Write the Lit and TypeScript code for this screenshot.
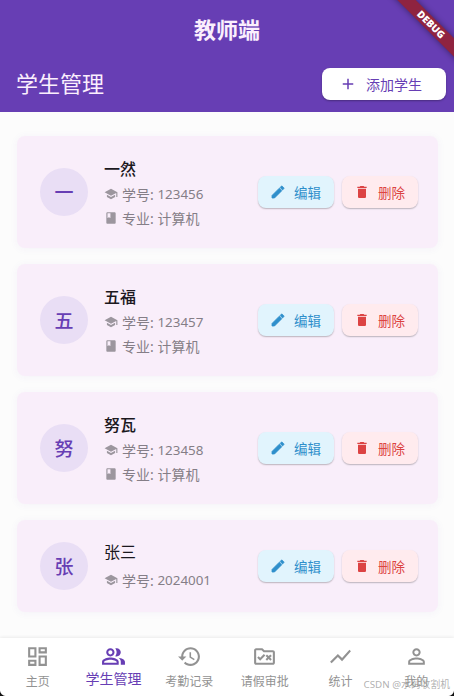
import { LitElement, html, css, svg } from "lit";
import { customElement, property } from "lit/decorators.js";

const ICONS: Record<string, string> = {
  dashboard: "M19 5v2h-4V5h4M9 5v6H5V5h4m10 8v6h-4v-6h4M9 17v2H5v-2h4M21 3h-8v6h8V3zM11 3H3v10h8V3zm10 8h-8v10h8V11zm-10 4H3v6h8v-6z",
  people: "M16.67 13.13C18.04 14.06 19 15.32 19 17v3h4v-3c0-2.18-3.57-3.47-6.33-3.87zM15 12c2.21 0 4-1.79 4-4s-1.79-4-4-4c-.47 0-.91.1-1.33.24C14.5 5.27 15 6.58 15 8s-.5 2.73-1.33 3.76c.42.14.86.24 1.33.24zM9 12c2.21 0 4-1.79 4-4s-1.79-4-4-4-4 1.79-4 4 1.79 4 4 4zm0-6c1.1 0 2 .9 2 2s-.9 2-2 2-2-.9-2-2 .9-2 2-2zM9 13c-2.67 0-8 1.34-8 4v3h16v-3c0-2.66-5.33-4-8-4zm6 5H3v-.99C3.2 16.29 6.3 15 9 15s5.8 1.29 6 2v1z",
  history: "M13 3c-4.97 0-9 4.03-9 9H1l3.89 3.89.07.14L9 12H6c0-3.87 3.13-7 7-7s7 3.13 7 7-3.13 7-7 7c-1.93 0-3.68-.79-4.94-2.06l-1.42 1.42C8.27 19.99 10.51 21 13 21c4.97 0 9-4.03 9-9s-4.03-9-9-9zm-1 5v5l4.28 2.54.72-1.21-3.5-2.08V8H12z",
  rule: "M20 6h-8l-2-2H4c-1.1 0-1.99.9-1.99 2L2 18c0 1.1.9 2 2 2h16c1.1 0 2-.9 2-2V8c0-1.1-.9-2-2-2zm0 12H4V6h5.17l2 2H20v10zM7.83 16l4.95-4.95-1.41-1.42-3.54 3.54-1.41-1.41L5 13.17 7.83 16zM14.41 16L16 14.41 17.59 16 19 14.59 17.41 13 19 11.41 17.59 10 16 11.59 14.41 10 13 11.41 14.59 13 13 14.59z",
  chart: "M3.5 18.49l6-6.01 4 4L22 6.92l-1.41-1.41-7.09 7.97-4-4L2 16.99z",
  person: "M12 5.9c1.16 0 2.1.94 2.1 2.1s-.94 2.1-2.1 2.1S9.9 9.16 9.9 8s.94-2.1 2.1-2.1m0 9c2.97 0 6.1 1.46 6.1 2.1v1.1H5.9V17c0-.64 3.13-2.1 6.1-2.1M12 4C9.79 4 8 5.79 8 8s1.79 4 4 4 4-1.79 4-4-1.79-4-4-4zm0 9c-2.67 0-8 1.34-8 4v3h16v-3c0-2.66-5.33-4-8-4z",
  school: "M5 13.18v4L12 21l7-3.82v-4L12 17l-7-3.82zM12 3L1 9l11 6 9-4.91V17h2V9L12 3z",
  book: "M18 2H6c-1.1 0-2 .9-2 2v16c0 1.1.9 2 2 2h12c1.1 0 2-.9 2-2V4c0-1.1-.9-2-2-2zM6 4h5v8l-2.5-1.5L6 12V4z",
  edit: "M3 17.25V21h3.75L17.81 9.94l-3.75-3.75L3 17.25zM20.71 7.04c.39-.39.39-1.02 0-1.41l-2.34-2.34c-.39-.39-1.02-.39-1.41 0l-1.83 1.83 3.75 3.75 1.83-1.83z",
  delete: "M6 19c0 1.1.9 2 2 2h8c1.1 0 2-.9 2-2V7H6v12zM19 4h-3.5l-1-1h-5l-1 1H5v2h14V4z",
  add: "M19 13h-6v6h-2v-6H5v-2h6V5h2v6h6v2z",
};

@customElement("md-icon")
class MdIcon extends LitElement {
  @property() name = "";
  static styles = css`
    :host { display: block; flex: none; }
    svg { display: block; width: 100%; height: 100%; fill: currentColor; }
    .bold { stroke: currentColor; stroke-width: 1.2; }
  `;
  render() {
    return html`<svg class=${this.name === "edit" ? "bold" : ""} viewBox="0 0 24 24">${svg`<path d=${ICONS[this.name] ?? ""}></path>`}</svg>`;
  }
}

interface Student { name: string; id: string; major?: string; }

@customElement("student-card")
class StudentCard extends LitElement {
  @property({ attribute: false }) student!: Student;
  static styles = css`
    :host {
      display: flex; align-items: center; box-sizing: border-box; height: 112px;
      padding: 0 20px 0 23px; border-radius: 8px; background: #f9eefa;
      box-shadow: 0 1px 8px rgba(103, 62, 180, 0.05);
    }
    :host([short]) { height: 92px; }
    .avatar {
      width: 48px; height: 48px; border-radius: 50%; background: #e9def5; color: #673eb4;
      display: flex; align-items: center; justify-content: center;
      font-size: 19px; font-weight: 500; flex: none;
    }
    .info { margin-left: 16px; flex: 1; padding-top: 2px; }
    .name { font-size: 16px; font-weight: 500; line-height: 24px; color: #1b181e; margin-bottom: 1px; }
    :host([short]) .info { padding: 0; }
    :host([short]) .name { font-weight: 400; line-height: 23px; margin-bottom: 4px; }
    .line { display: flex; align-items: center; height: 24px; font-size: 14px; color: #857e87; white-space: pre; }
    .line md-icon { width: 14px; height: 14px; margin-right: 4px; color: #9c969e; }
    .num { font-size: 13.4px; }
    .actions { display: flex; gap: 8px; }
    .btn {
      display: flex; align-items: center; box-sizing: border-box; width: 76px; height: 32px;
      padding-left: 12px; border-radius: 8px; font-size: 13.5px;
      box-shadow: 0 1px 1.5px rgba(0, 0, 0, 0.25);
    }
    .btn md-icon { width: 16px; height: 16px; margin-right: 8px; }
    .edit { background: #e1f4fd; color: #2f8fcb; }
    .delete { background: #ffebee; color: #dc4343; }
  `;
  render() {
    const s = this.student;
    return html`
      <div class="avatar">${s.name[0]}</div>
      <div class="info">
        <div class="name">${s.name}</div>
        <div class="line"><md-icon name="school"></md-icon>学号: <span class="num">${s.id}</span></div>
        ${s.major ? html`<div class="line"><md-icon name="book"></md-icon>专业: ${s.major}</div>` : null}
      </div>
      <div class="actions">
        <div class="btn edit"><md-icon name="edit"></md-icon>编辑</div>
        <div class="btn delete"><md-icon name="delete"></md-icon>删除</div>
      </div>`;
  }
}

const STUDENTS: Student[] = [
  { name: "一然", id: "123456", major: "计算机" },
  { name: "五福", id: "123457", major: "计算机" },
  { name: "努瓦", id: "123458", major: "计算机" },
  { name: "张三", id: "2024001" },
];

const TABS = [
  ["dashboard", "主页"],
  ["people", "学生管理"],
  ["history", "考勤记录"],
  ["rule", "请假审批"],
  ["chart", "统计"],
  ["person", "我的"],
];

@customElement("app-root")
class AppRoot extends LitElement {
  static styles = css`
    :host {
      display: flex; flex-direction: column; position: relative; overflow: hidden;
      height: 696px; background: #fcfcfc;
      font-family: "Noto Sans", "Noto Sans CJK SC", sans-serif;
    }
    header { height: 112px; background: #673eb4; color: #fbeffd; flex: none; }
    .title { height: 60px; line-height: 59px; text-align: center; font-size: 22px; font-weight: 700; }
    .bar { display: flex; align-items: center; justify-content: space-between; height: 48px; padding: 0 8px 0 16px; }
    .heading { font-size: 22px; line-height: 32px; margin-top: -2px; }
    .add {
      display: flex; align-items: center; box-sizing: border-box; width: 124px; height: 32px;
      padding-left: 17px; border-radius: 8px; background: #fff; color: #673eb4;
      font-size: 14px; font-weight: 400; box-shadow: 0 1px 2px rgba(0, 0, 0, 0.3);
    }
    .add md-icon { width: 18px; height: 18px; margin-right: 9px; }
    .ribbon {
      position: absolute; top: 18px; right: -27px; width: 100px; height: 13px; transform: rotate(45deg);
      background: #8f2340; color: #fff; font-size: 10px; line-height: 13px; font-weight: 900;
      text-align: center; box-shadow: 0 0 6px rgba(0, 0, 0, 0.45);
    }
    main { flex: 1; display: flex; flex-direction: column; gap: 16px; padding: 24px 16px 0 17px; }
    nav {
      display: flex; height: 58px; flex: none; background: #fff;
      box-shadow: 0 -1px 3px rgba(0, 0, 0, 0.07);
    }
    .tab { flex: 1; display: flex; flex-direction: column; align-items: center; padding-top: 6px; color: #929292; font-size: 12px; }
    .tab md-icon { width: 25px; height: 25px; }
    .tab span { line-height: 18px; margin-top: 4px; }
    .tab.on { color: #673eb4; font-size: 14px; }
    .tab.on span { margin-top: 1px; }
    .mark { position: absolute; right: 4px; bottom: 3px; font-size: 9.8px; line-height: 16px; color: rgba(150, 150, 150, 0.75); white-space: nowrap; }
    .corner { position: absolute; bottom: 0; width: 6px; height: 6px; }
    .left { left: 0; background: radial-gradient(circle at 100% 0, transparent 5.5px, #111 6.5px); }
    .right { right: 0; background: radial-gradient(circle at 0 0, transparent 5.5px, #111 6.5px); }
  `;
  render() {
    return html`
      <header>
        <div class="title">教师端</div>
        <div class="bar">
          <div class="heading">学生管理</div>
          <div class="add"><md-icon name="add"></md-icon>添加学生</div>
        </div>
      </header>
      <main>
        ${STUDENTS.map((s) => html`<student-card .student=${s} ?short=${!s.major}></student-card>`)}
      </main>
      <nav>
        ${TABS.map(([icon, label], i) => html`
          <div class="tab ${i === 1 ? "on" : ""}"><md-icon name=${icon}></md-icon><span>${label}</span></div>`)}
      </nav>
      <div class="ribbon">DEBUG</div>
      <div class="mark">CSDN @水码收割机</div>
      <div class="corner left"></div>
      <div class="corner right"></div>`;
  }
}
